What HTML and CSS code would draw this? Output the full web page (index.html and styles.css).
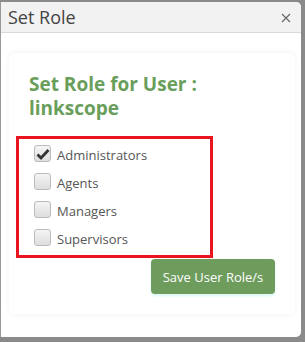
FILE: index.html
```html
<!DOCTYPE html>
<html>
<head>
<meta charset="utf-8">
<link rel="stylesheet" href="styles.css">
</head>
<body>
<div class="dialog">
  <div class="dialog-header">
    <span class="dialog-title">Set Role</span>
    <span class="close">
      <svg width="10" height="10" viewBox="0 0 10 10"><path d="M1 1L9 9M9 1L1 9" stroke="#666" stroke-width="1.1"/></svg>
    </span>
  </div>
  <div class="dialog-body">
    <div class="card">
      <h2 class="heading">Set Role for User :<br>linkscope</h2>
      <div class="roles">
        <label class="role"><span class="cb checked"><svg width="14" height="12" viewBox="0 0 14 12"><path d="M1.5 6.5L5 10L12.5 2" stroke="#333" stroke-width="2.8" fill="none"/></svg></span>Administrators</label>
        <label class="role"><span class="cb"></span>Agents</label>
        <label class="role"><span class="cb"></span>Managers</label>
        <label class="role"><span class="cb"></span>Supervisors</label>
      </div>
      <div class="actions">
        <button class="save">Save User Role/s</button>
      </div>
    </div>
  </div>
</div>
</body>
</html>
```
FILE: styles.css
```css
html, body {
  margin: 0;
  padding: 0;
}
body {
  background: #8a8a8a;
  width: 305px;
  height: 342px;
  overflow: hidden;
  font-family: "Open Sans", sans-serif;
}
.dialog {
  margin-top: 2px;
  width: 301px;
  height: 335px;
  background: #fff;
  border-left: 1px solid #999;
  box-sizing: border-box;
  border-radius: 0 5px 5px 0;
  overflow: hidden;
}
.dialog-header {
  height: 30px;
  background: #f2f2f2;
  border-bottom: 1px solid #d9d9d9;
  display: flex;
  align-items: center;
  justify-content: space-between;
  padding: 0 10px 0 7px;
}
.dialog-title {
  font-size: 18px;
  color: #444;
}
.close {
  display: flex;
  margin-top: 2px;
}
.dialog-body {
  padding: 20px 6px 0 8px;
}
.card {
  border-radius: 6px;
  box-shadow: 0 0 6px rgba(0,0,0,0.06);
  padding: 19px 20px 20px 7px;
}
.heading {
  margin: 0 0 16px 13px;
  font-size: 19px;
  line-height: 24px;
  font-weight: 700;
  color: #6a9e5b;
}
.roles {
  border: 3px solid #e8141f;
  width: 176px;
  padding: 2px 0 2px 15px;
  display: flex;
  flex-direction: column;
}
.role {
  display: flex;
  align-items: center;
  height: 28px;
  font-size: 13px;
  color: #555;
}
.cb {
  width: 15px;
  height: 15px;
  border: 1px solid #bbb;
  border-radius: 3px;
  background: linear-gradient(#f4f4f4, #dedede);
  margin: -3px 6px 0 0;
  display: flex;
  align-items: center;
  justify-content: center;
  flex: none;
}
.actions {
  display: flex;
  justify-content: flex-end;
  margin-top: 1px;
}
.save {
  width: 124px;
  height: 35px;
  background: #6e9c5c;
  color: #fff;
  border: none;
  border-radius: 4px;
  font-family: "Open Sans", sans-serif;
  font-size: 13px;
  box-shadow: 0 2px 3px rgba(120, 220, 230, 0.25);
  padding: 0;
}
```
